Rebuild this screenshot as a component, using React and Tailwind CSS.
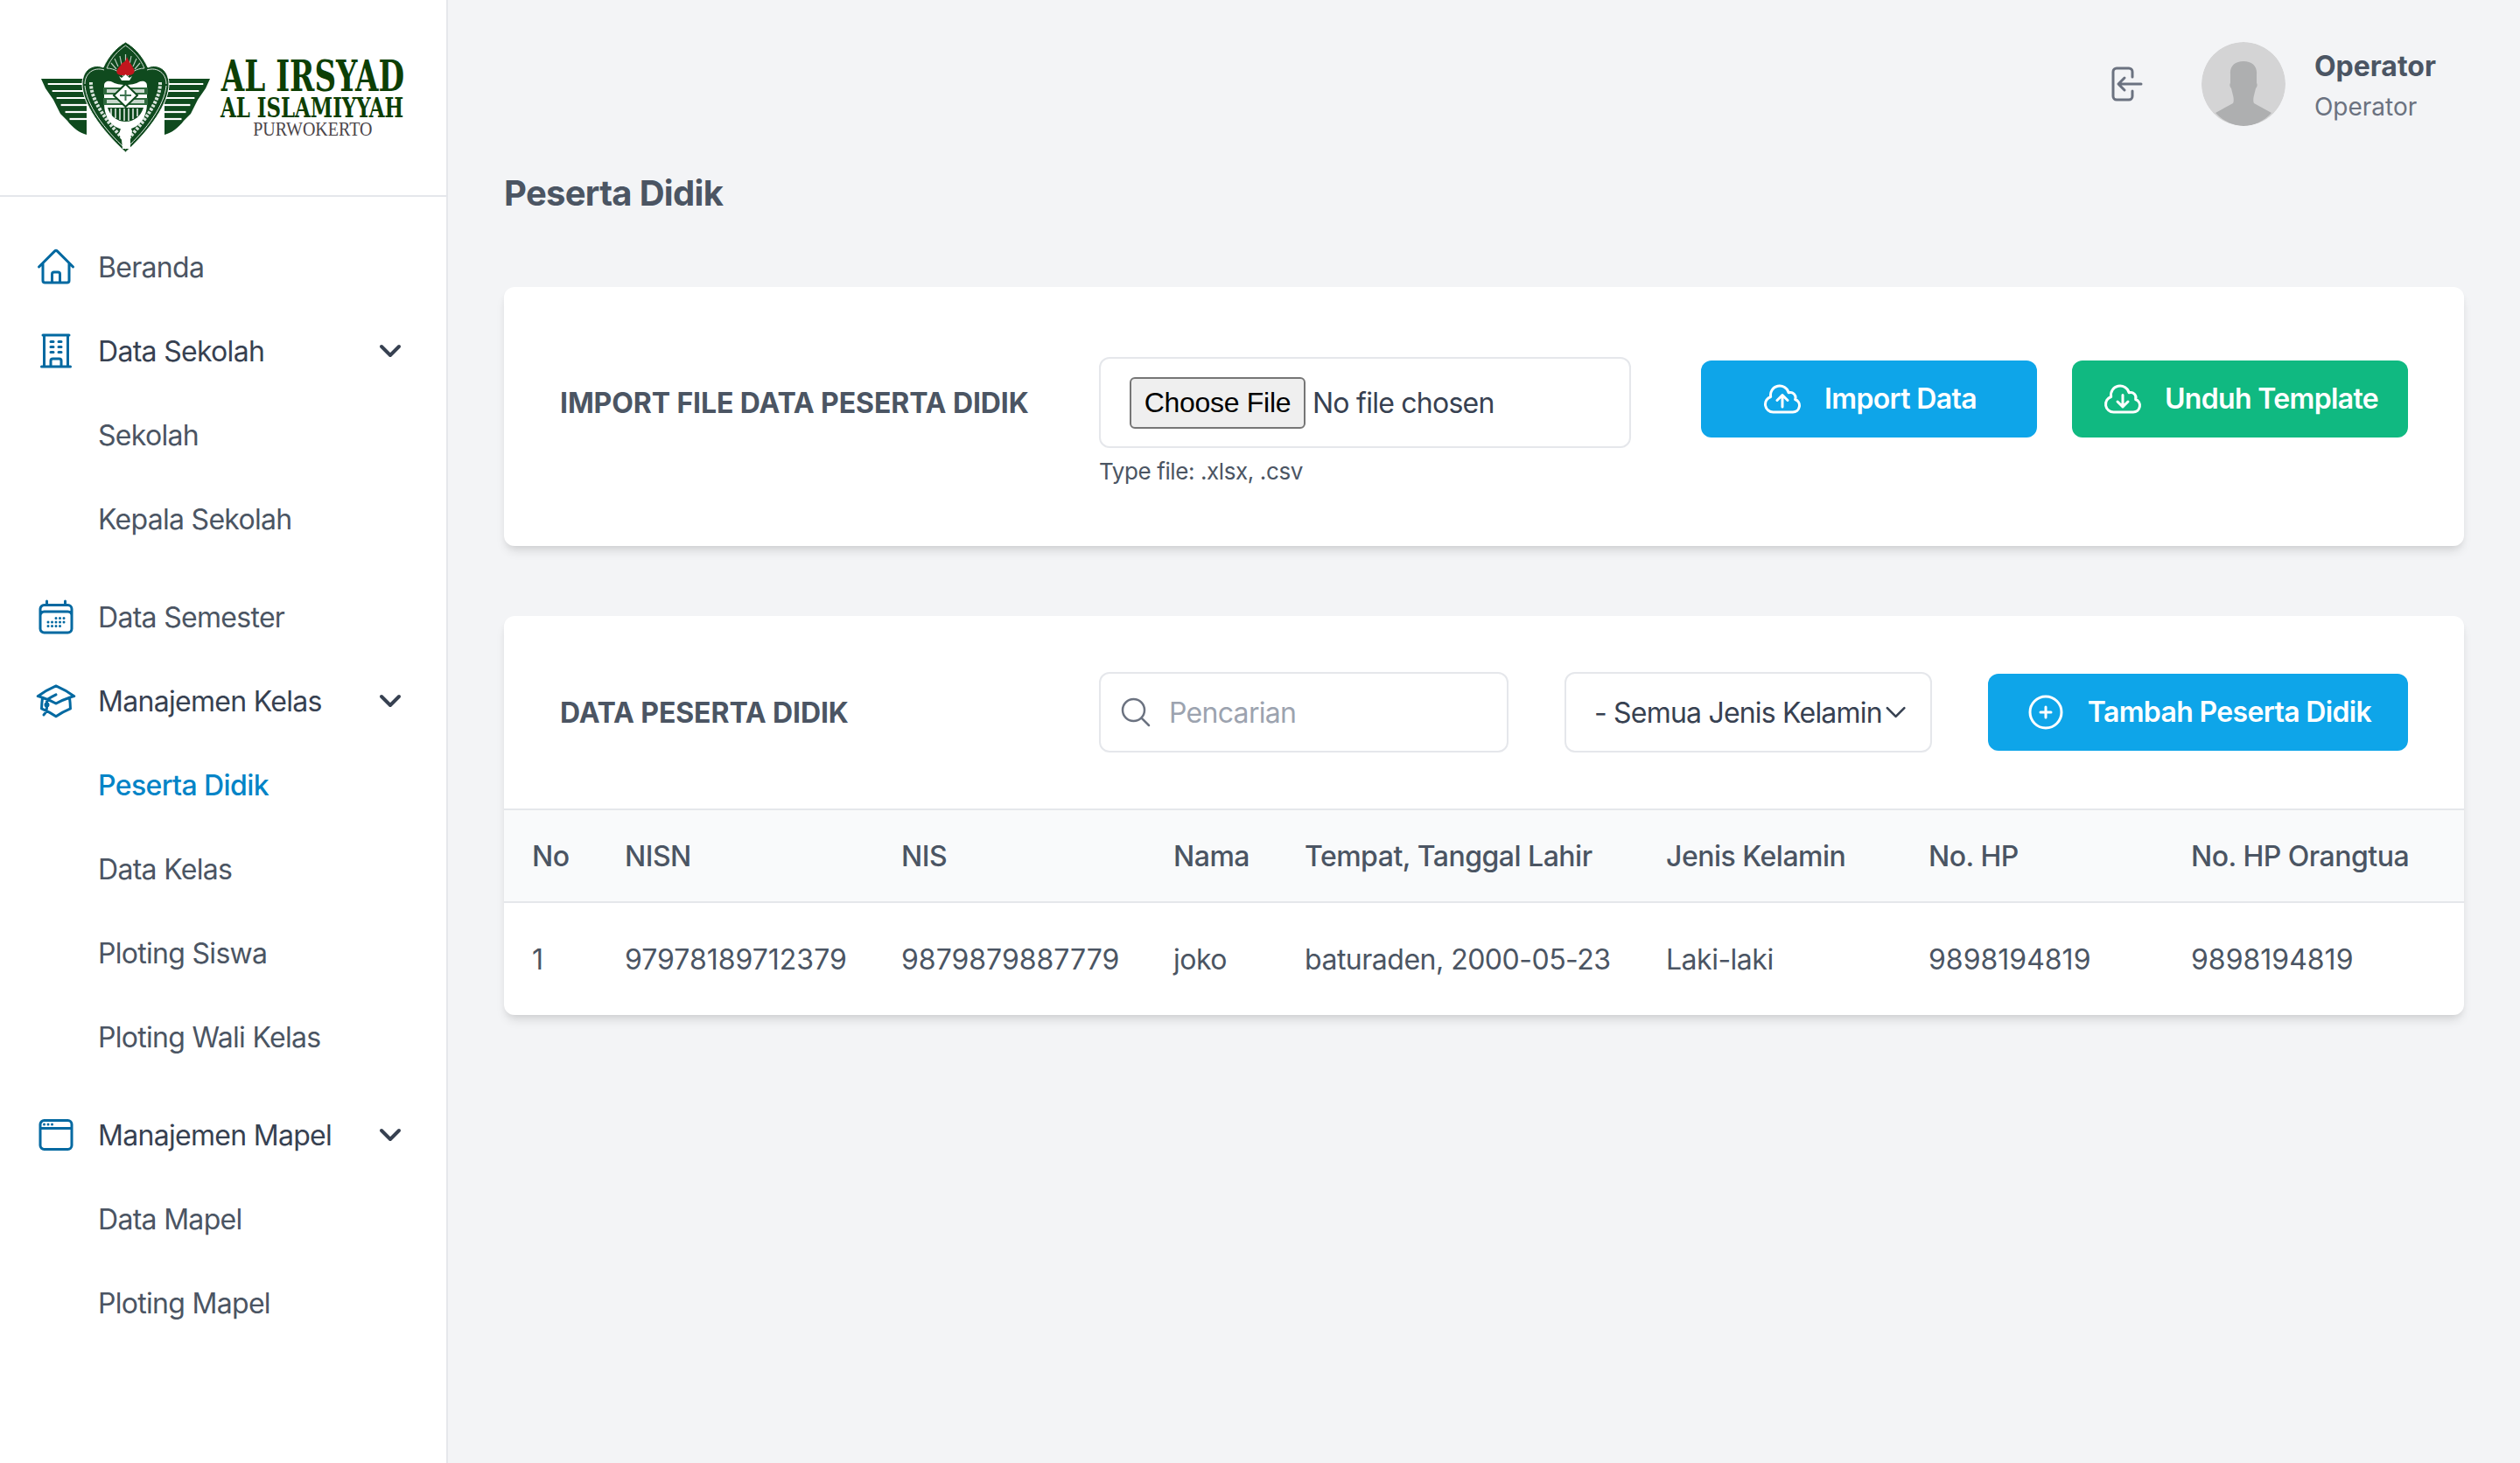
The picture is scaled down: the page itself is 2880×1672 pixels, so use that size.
import React from "react";
import {
  HiOutlineHome,
  HiOutlineBuildingOffice,
  HiOutlineCalendarDays,
  HiOutlineAcademicCap,
  HiOutlineWindow,
  HiOutlineCloudArrowUp,
  HiOutlineCloudArrowDown,
  HiOutlinePlusCircle,
  HiOutlineMagnifyingGlass,
  HiOutlineChevronDown,
} from "react-icons/hi2";

const nav = [
  { label: "Beranda", icon: HiOutlineHome },
  { label: "Data Sekolah", icon: HiOutlineBuildingOffice, children: ["Sekolah", "Kepala Sekolah"] },
  { label: "Data Semester", icon: HiOutlineCalendarDays },
  { label: "Manajemen Kelas", icon: HiOutlineAcademicCap, children: ["Peserta Didik", "Data Kelas", "Ploting Siswa", "Ploting Wali Kelas"] },
  { label: "Manajemen Mapel", icon: HiOutlineWindow, children: ["Data Mapel", "Ploting Mapel"] },
];

const columns = [
  { label: "No", w: "w-[106px]" },
  { label: "NISN", w: "w-[316px]" },
  { label: "NIS", w: "w-[311px]" },
  { label: "Nama", w: "w-[150px]" },
  { label: "Tempat, Tanggal Lahir", w: "w-[413px]" },
  { label: "Jenis Kelamin", w: "w-[300px]" },
  { label: "No. HP", w: "w-[300px]" },
  { label: "No. HP Orangtua", w: "w-[344px]" },
];
const rows = [["1", "97978189712379", "9879879887779", "joko", "baturaden, 2000-05-23", "Laki-laki", "9898194819", "9898194819"]];

function Wing({ flip }) {
  const bands = [48, 56, 64, 72, 80, 88];
  return (
    <g transform={flip ? "translate(193 0) scale(-1 1)" : undefined}>
      <path d="M0 42H52V106C44 104 36 98 30 90L22 82L14 66L5 53Z" fill="#0f4a1e" />
      {bands.map((y) => (
        <path key={y} d={`M${(y - 42) * 0.62 + 4} ${y}H52`} stroke="#fff" strokeWidth="2.2" />
      ))}
    </g>
  );
}

function Emblem() {
  return (
    <svg viewBox="0 0 193 127" className="w-[193px] h-[127px] shrink-0">
      <Wing />
      <Wing flip />
      {/* shield */}
      <path d="M96.5 0C107 6 116 16 122 29C134 24 146 32 146 48C146 70 125 100 96.5 126C68 100 47 70 47 48C47 32 59 24 71 29C77 16 86 6 96.5 0Z" fill="#0f4a1e" stroke="#fff" strokeWidth="1" />
      <path d="M96.5 4C105 10 113 18 118 30C109 30 102 35 96.5 42C91 35 84 30 75 30C80 18 88 10 96.5 4Z" fill="none" stroke="#cfdcd2" strokeWidth="1" />
      <path d="M50 48C50 36 60 28 72 32M143 48C143 36 133 28 121 32M50 50C52 72 72 100 96.5 122C121 100 141 72 143 50" fill="none" stroke="#e3ebe5" strokeWidth="1" />
      <path d="M57 46C56 66 76 92 93 110M136 46C137 66 117 92 100 110" fill="none" stroke="#d9e4dc" strokeWidth="4" strokeDasharray="3 1.5" />
      {/* rays */}
      <path d="M96.5 14V26M90 16L92 26M103 16L101 26M84 19L88 28M109 19L105 28M80 24L86 31M113 24L107 31" stroke="#b8cbbd" strokeWidth="1.2" />
      {/* books */}
      <path d="M72 50C72 44 78 44 82 46C88 50 105 50 111 46C115 44 121 44 121 50V70C121 88 110 100 96.5 100C83 100 72 88 72 70Z" fill="#fff" />
      <path d="M71 52H122V60H71ZM71 64H122V72H71Z" fill="#2f6a3e" />
      <path d="M75 54H118V58H75ZM75 66H118V70H75Z" fill="#fff" opacity=".75" />
      <path d="M76 75H117C114 85 106 91 96.5 91C87 91 79 85 76 75Z" fill="#0f4a1e" />
      <path d="M80 76V84M85 76V87M90 76V89M95 76V90M100 76V90M105 76V88M110 76V85" stroke="#fff" strokeWidth="1.4" />
      <path d="M96.5 48L110 61L96.5 74L83 61Z" fill="#fff" stroke="#0f4a1e" strokeWidth="2" />
      <path d="M90 61H103M96.5 55V67" stroke="#3d7350" strokeWidth="2" />
      {/* flame */}
      <path d="M98 17C100 22 103 25 106 31C108 35 105 38 100 38H91C86 37 85 34 88 30C90 27 91 28 92 24C94 24 97 22 98 17Z" fill="#c2161d" />
      <path d="M92 41L96.5 37L101 41L104 39L101 44H92L89 39Z" fill="#fff" />
      {/* hand */}
      <path d="M91 99C95 95 103 96 104 102L102 110L102 122H93L92 112L89 105Z" fill="#fff" />
    </svg>
  );
}

function Logo() {
  return (
    <div className="h-[225px] border-b-2 border-[#e5e7eb] flex items-center pl-[47px]">
      <Emblem />
      <div className="ml-[13px] w-[208px] flex flex-col items-center text-[#0d3f05]">
        <div className="h-[38px] text-[48px] leading-[38px] font-bold font-['DejaVu_Serif',serif] [font-stretch:condensed] scale-x-[0.79] whitespace-nowrap">AL IRSYAD</div>
        <div className="h-[34px] text-[31px] leading-[34px] font-bold font-['DejaVu_Serif',serif] [font-stretch:condensed] scale-x-[0.82] whitespace-nowrap">AL ISLAMIYYAH</div>
        <div className="h-[16px] text-[23px] leading-[16px] text-[#4b4549] font-['Liberation_Serif',serif] scale-x-[0.87] whitespace-nowrap">PURWOKERTO</div>
      </div>
    </div>
  );
}

function Sidebar() {
  return (
    <aside className="w-[512px] shrink-0 min-h-[1672px] bg-white border-r-2 border-[#e5e7eb]">
      <Logo />
      <nav className="pt-[32px]">
        {nav.map((item) => {
          const Icon = item.icon;
          return (
            <div key={item.label} className={item.children ? "pb-[16px]" : ""}>
              <div className="h-[96px] pl-[40px] pr-[48px] flex items-center text-[32px] tracking-[-0.7px]">
                <Icon className="w-[48px] h-[48px] text-[#0369a1] mr-[24px]" />
                <span className={item.children ? "flex-1 pt-[2px] text-[#374151]" : "flex-1 pt-[2px] text-[#4b5563]"}>{item.label}</span>
                {item.children && <HiOutlineChevronDown className="w-[32px] h-[32px] text-[#374151]" strokeWidth={3} />}
              </div>
              {item.children &&
                item.children.map((c) => (
                  <div key={c} className={`h-[96px] pl-[112px] pt-[2px] flex items-center text-[32px] ${c === "Peserta Didik" ? "text-[#0284c7] font-medium tracking-[-0.6px]" : "text-[#4b5563] tracking-[-0.7px]"}`}>
                    {c}
                  </div>
                ))}
            </div>
          );
        })}
      </nav>
    </aside>
  );
}

function Btn({ icon: Icon, color, children, className }) {
  return (
    <button className={`h-[88px] rounded-[12px] flex items-center justify-center gap-[24px] text-white text-[32px] font-semibold tracking-[-0.65px] ${color} ${className}`}>
      <Icon className="w-[48px] h-[48px]" />
      {children}
    </button>
  );
}

const cardCls = "bg-white rounded-[12px] shadow-[0_8px_12px_-2px_rgba(0,0,0,0.1),0_4px_8px_-4px_rgba(0,0,0,0.1)]";

export default function App() {
  return (
    <div className="flex min-h-[1672px] bg-[#f3f4f6] font-['Inter',sans-serif]">
      <Sidebar />
      <main className="flex-1 min-w-0 px-[64px]">
        <header className="h-[192px] flex items-center justify-end pr-[32px]">
          <svg viewBox="0 0 36 40" className="w-[36px] h-[40px] mr-[67px] text-[#6b7280]" fill="none" stroke="currentColor" strokeWidth="3" strokeLinecap="round" strokeLinejoin="round">
            <path d="M24 12V6a4 4 0 0 0-4-4H6a4 4 0 0 0-4 4v28a4 4 0 0 0 4 4h14a4 4 0 0 0 4-4v-6" />
            <path d="M34 20H9M15 13l-7 7 7 7" />
          </svg>
          <svg viewBox="0 0 96 96" className="w-[96px] h-[96px] rounded-full mr-[33px]">
            <circle cx="48" cy="48" r="48" fill="#d4d4d5" />
            <path d="M48 22c-10 0-16 6-15 15l0 10c-1 1-1 4 1 6l2 8c1 3 1 7 0 9l-20 11c8 9 20 15 32 15s24-6 32-15l-20-11c-1-2-1-6 0-9l2-8c2-2 2-5 1-6l0-10c1-9-5-15-15-15Z" fill="#aeafb0" />
          </svg>
          <div className="pt-[3px]">
            <div className="text-[32px] leading-[48px] font-bold text-[#4b5563]">Operator</div>
            <div className="text-[28px] leading-[44px] text-[#6b7280]">Operator</div>
          </div>
        </header>
        <h1 className="text-[40px] leading-[58px] font-bold tracking-[-0.7px] text-[#4b5563] mb-[78px]">Peserta Didik</h1>

        <section className={`h-[296px] px-[64px] flex items-start pt-[80px] ${cardCls}`}>
          <div className="w-[616px] h-[106px] flex items-center text-[32px] font-bold tracking-[-0.1px] text-[#4b5563]">IMPORT FILE DATA PESERTA DIDIK</div>
          <div className="w-[688px]">
            <div className="w-[608px] h-[104px] rounded-[12px] border-2 border-[#e5e7eb] flex items-center pl-[33px]">
              <input
                type="file"
                className="w-full text-[32px] tracking-[-0.75px] text-[#374151] file:h-[59px] file:w-[201px] file:mr-[8px] file:rounded-[6px] file:border-2 file:border-[#767676] file:bg-[#efefef] file:text-black file:text-[32px] file:tracking-[-0.3px] file:font-['Liberation_Sans',sans-serif]"
              />
            </div>
            <div className="mt-[11px] text-[26px] leading-[32px] tracking-[-0.4px] text-[#4b5563]">Type file: .xlsx, .csv</div>
          </div>
          <div className="flex gap-[40px] mt-[4px]">
            <Btn icon={HiOutlineCloudArrowUp} color="bg-[#0ea5e9]" className="w-[384px]">Import Data</Btn>
            <Btn icon={HiOutlineCloudArrowDown} color="bg-[#10b981]" className="w-[384px]">Unduh Template</Btn>
          </div>
        </section>

        <section className={`mt-[80px] overflow-hidden ${cardCls}`}>
          <div className="h-[222px] px-[64px] flex items-center border-b-2 border-[#e5e7eb]">
            <div className="w-[616px] pt-[2px] text-[32px] font-bold tracking-[-0.1px] text-[#4b5563]">DATA PESERTA DIDIK</div>
            <div className="w-[468px] h-[92px] rounded-[12px] border-2 border-[#e5e7eb] flex items-center pl-[20px] gap-[18px] mr-[64px]">
              <HiOutlineMagnifyingGlass className="w-[40px] h-[40px] text-[#6b7280]" />
              <span className="pt-[2px] text-[32px] tracking-[-0.7px] text-[#9ca3af]">Pencarian</span>
            </div>
            <div className="w-[420px] h-[92px] rounded-[12px] border-2 border-[#e5e7eb] flex items-center pl-[32px] pr-[24px] text-[32px] tracking-[-0.8px] text-[#374151] mr-[64px] whitespace-nowrap">
              <span className="flex-1 pt-[2px]">- Semua Jenis Kelamin</span>
              <HiOutlineChevronDown className="w-[36px] h-[36px]" strokeWidth={2} />
            </div>
            <Btn icon={HiOutlinePlusCircle} color="bg-[#0ea5e9]" className="w-[480px]">Tambah Peserta Didik</Btn>
          </div>
          <table className="w-full table-fixed text-[32px] text-left">
            <thead className="bg-[#f9fafb] border-b-2 border-[#e5e7eb]">
              <tr className="h-[105px]">
                {columns.map((c) => (
                  <th key={c.label} className={`pl-[32px] pt-[2px] font-medium tracking-[-0.5px] text-[#4b5563] whitespace-nowrap ${c.w}`}>{c.label}</th>
                ))}
              </tr>
            </thead>
            <tbody>
              {rows.map((r, i) => (
                <tr key={i} className="h-[129px]">
                  {r.map((v, j) => (
                    <td key={j} className={`pl-[32px] pt-[2px] text-[#4b5563] whitespace-nowrap ${/[a-z]/.test(v) ? "tracking-[-0.5px]" : ""}`}>{v}</td>
                  ))}
                </tr>
              ))}
            </tbody>
          </table>
        </section>
      </main>
    </div>
  );
}
